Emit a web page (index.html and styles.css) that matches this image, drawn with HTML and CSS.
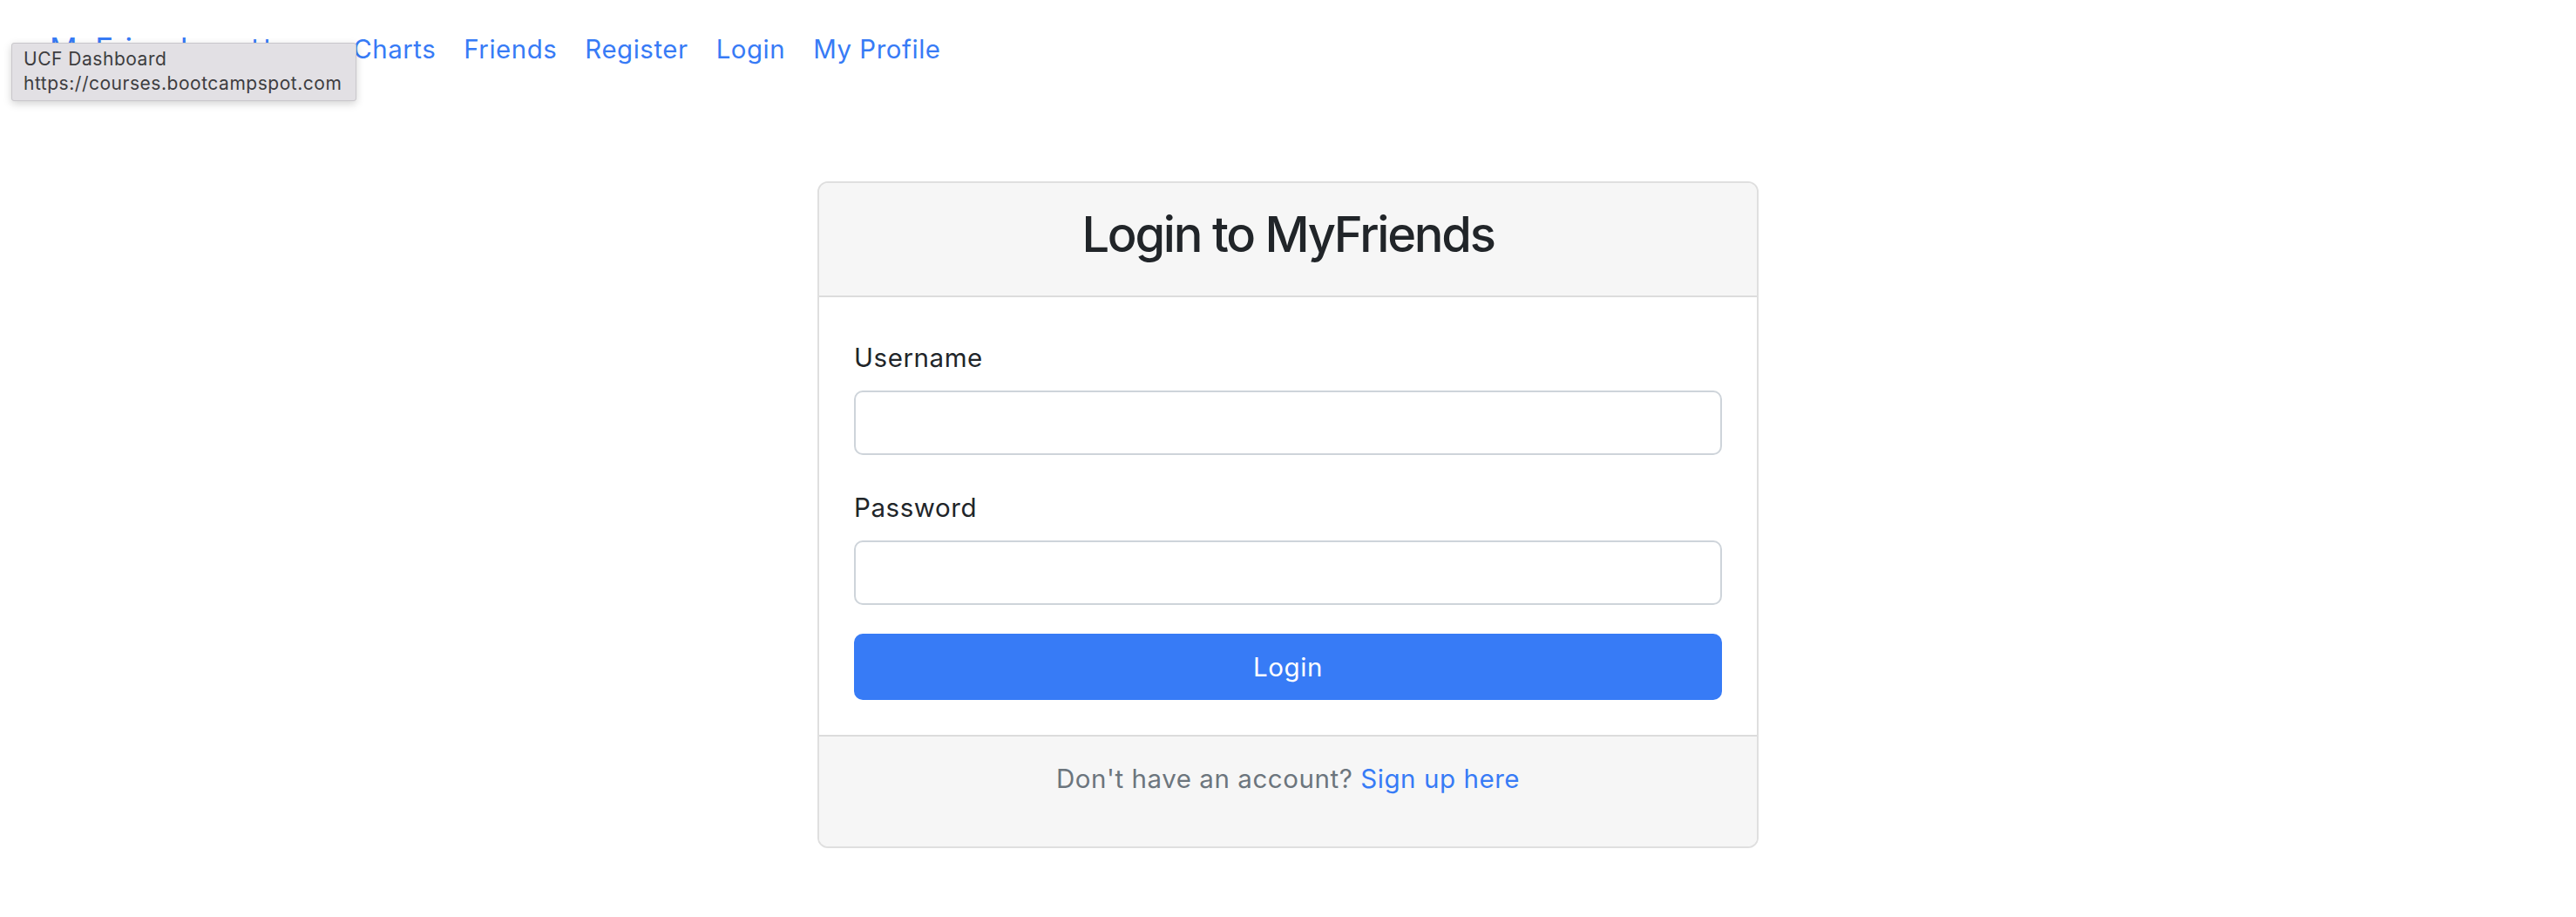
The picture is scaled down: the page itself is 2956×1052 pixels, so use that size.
FILE: index.html
```html
<!DOCTYPE html>
<html lang="en">
<head>
<meta charset="utf-8">
<title>Login to MyFriends</title>
<link rel="stylesheet" href="styles.css">
</head>
<body>
<nav class="navbar">
  <a class="brand" href="#">MyFriends</a>
  <ul class="nav-links">
    <li><a href="#">Home</a></li>
    <li><a href="#">Charts</a></li>
    <li><a href="#">Friends</a></li>
    <li><a href="#">Register</a></li>
    <li><a href="#">Login</a></li>
    <li><a href="#">My Profile</a></li>
  </ul>
  <div class="tooltip">
    <div>UCF Dashboard</div>
    <div>https://courses.bootcampspot.com</div>
  </div>
</nav>
<main class="main">
  <section class="card">
    <header class="card-header">
      <h2 class="card-title">Login to MyFriends</h2>
    </header>
    <form class="card-body">
      <label class="form-label" for="username">Username</label>
      <input class="form-control" id="username" type="text">
      <label class="form-label second" for="password">Password</label>
      <input class="form-control" id="password" type="password">
      <button class="btn" type="button">Login</button>
    </form>
    <footer class="card-footer">
      <p class="footer-text">Don't have an account? <a href="#">Sign up here</a></p>
    </footer>
  </section>
</main>
</body>
</html>
```

FILE: styles.css
```css
* { box-sizing: border-box; }

html, body {
  margin: 0;
  padding: 0;
  background: #ffffff;
}

body {
  font-family: Inter, "Noto Sans", "Liberation Sans", sans-serif;
  font-size: 28px;
  color: #212529;
  letter-spacing: 0.02em;
}

a {
  color: #377bf6;
  text-decoration: none;
}

.navbar {
  position: relative;
  display: flex;
  align-items: center;
  height: 112px;
  padding-left: 57px;
}

.brand {
  font-size: 35px;
  margin-right: 38px;
  letter-spacing: 0.01em;
}

.nav-links {
  display: flex;
  list-style: none;
  margin: 0;
  padding: 0;
}

.nav-links a {
  display: block;
  padding: 0 16px;
  font-size: 29.4px;
}

.tooltip {
  position: absolute;
  left: 13px;
  top: 49px;
  width: 396px;
  height: 67px;
  padding: 4px 13px 0;
  background: #e2e0e4;
  border: 1px solid #c9c7cb;
  border-radius: 3px;
  box-shadow: 0 3px 10px rgba(0, 0, 0, 0.18);
  color: #3d3d3f;
  font-size: 21px;
  line-height: 28px;
  letter-spacing: 0.025em;
}

.main {
  display: flex;
  justify-content: center;
  padding-top: 96px;
}

.card {
  width: 1080px;
  border: 2px solid #dfdfdf;
  border-radius: 12px;
  overflow: hidden;
  background: #ffffff;
}

.card-header {
  background: #f6f6f6;
  border-bottom: 2px solid #dcdcdc;
  padding: 26px 20px 36px;
  text-align: center;
}

.card-title {
  margin: 0;
  font-size: 56px;
  font-weight: 500;
  line-height: 67px;
  letter-spacing: -0.04em;
}

.card-body {
  display: flex;
  flex-direction: column;
  padding: 48px 40px 40px;
}

.form-label {
  display: block;
  line-height: 42px;
  margin-bottom: 17px;
  font-size: 29.5px;
}

.form-label.second {
  margin-top: 39px;
}

.form-control {
  display: block;
  width: 100%;
  height: 74px;
  border: 2px solid #ced4da;
  border-radius: 10px;
  background: #ffffff;
  font: inherit;
}

.btn {
  margin-top: 33px;
  height: 76px;
  border: none;
  border-radius: 10px;
  background: #377bf6;
  color: #ffffff;
  font-family: inherit;
  font-size: 29.5px;
  letter-spacing: 0.02em;
}

.card-footer {
  background: #f6f6f6;
  border-top: 2px solid #dcdcdc;
  padding: 24px 20px 22px;
  text-align: center;
}

.footer-text {
  margin: 0 0 32px;
  line-height: 48px;
  font-size: 29.5px;
  color: #6c757d;
}
```
